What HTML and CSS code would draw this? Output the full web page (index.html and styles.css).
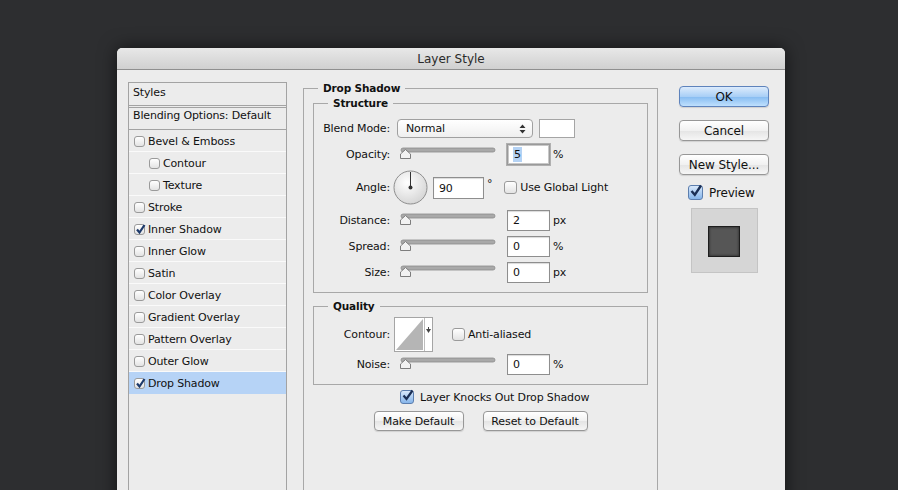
FILE: index.html
```html
<!DOCTYPE html>
<html lang="en">
<head>
    <meta charset="UTF-8">
    <title>Layer Style</title>
    <link rel="stylesheet" href="styles.css">
</head>
<body>
<div class="dialog">
    <div class="titlebar">Layer Style</div>
    <div class="dialog-body">
        <div class="styles-list">
            <div class="list-head">Styles</div>
            <div class="list-blend">Blending Options: Default</div>
            <div class="list-item"><span class="cb"></span>Bevel &amp; Emboss</div>
            <div class="list-item sub"><span class="cb"></span>Contour</div>
            <div class="list-item sub"><span class="cb"></span>Texture</div>
            <div class="list-item"><span class="cb"></span>Stroke</div>
            <div class="list-item"><span class="cb on"><svg width="11" height="11" viewBox="0 0 11 11"><path d="M2 5.5 L4.5 8.5 L9.5 1" fill="none" stroke="#1d3a6b" stroke-width="2.2"/></svg></span>Inner Shadow</div>
            <div class="list-item"><span class="cb"></span>Inner Glow</div>
            <div class="list-item"><span class="cb"></span>Satin</div>
            <div class="list-item"><span class="cb"></span>Color Overlay</div>
            <div class="list-item"><span class="cb"></span>Gradient Overlay</div>
            <div class="list-item"><span class="cb"></span>Pattern Overlay</div>
            <div class="list-item"><span class="cb"></span>Outer Glow</div>
            <div class="list-item selected"><span class="cb on"><svg width="11" height="11" viewBox="0 0 11 11"><path d="M2 5.5 L4.5 8.5 L9.5 1" fill="none" stroke="#1d3a6b" stroke-width="2.2"/></svg></span>Drop Shadow</div>
            <div class="list-rest"></div>
        </div>

        <div class="panel">
            <fieldset class="group outer">
                <legend>Drop Shadow</legend>

                <fieldset class="group inner structure">
                    <legend>Structure</legend>
                    <div class="row h19">
                        <label class="lbl">Blend Mode:</label>
                        <div class="select">Normal
                            <svg class="updown" width="7" height="10" viewBox="0 0 7 10"><path d="M3.5 0.5 L6.5 4 L0.5 4 Z M3.5 9.5 L6.5 6 L0.5 6 Z" fill="#333"/></svg>
                        </div>
                        <div class="swatch"></div>
                    </div>
                    <div class="row h21 gap6">
                        <label class="lbl">Opacity:</label>
                        <svg class="slider" width="96" height="12" viewBox="0 0 96 12"><rect x="1" y="1" width="94" height="4" rx="2" fill="#a9a9a9" stroke="#8c8c8c" stroke-width="0.8"/><path d="M0.5 11.5 L0.5 7 L5.5 2.5 L10.5 7 L10.5 11.5 Z" fill="#f2f2f2" stroke="#7d7d7d"/></svg>
                        <div class="field focus"><span class="sel">5</span></div>
                        <span class="unit">%</span>
                    </div>
                    <div class="row h35 gap5">
                        <label class="lbl">Angle:</label>
                        <svg class="dial" width="35" height="35" viewBox="0 0 35 35">
                            <defs><radialGradient id="dg" cx="0.4" cy="0.35" r="0.7"><stop offset="0" stop-color="#ffffff"/><stop offset="1" stop-color="#d4d4d4"/></radialGradient></defs>
                            <circle cx="17.5" cy="17.5" r="16.5" fill="url(#dg)" stroke="#8e8e8e"/>
                            <line x1="17.5" y1="17.5" x2="17.5" y2="2" stroke="#333" stroke-width="1"/>
                            <circle cx="17.5" cy="17.5" r="2" fill="#333"/>
                        </svg>
                        <div class="field angle">90</div>
                        <span class="deg">°</span>
                        <span class="cb big global"></span>
                        <span class="cb-text">Use Global Light</span>
                    </div>
                    <div class="row h21 gap5">
                        <label class="lbl">Distance:</label>
                        <svg class="slider" width="96" height="12" viewBox="0 0 96 12"><rect x="1" y="1" width="94" height="4" rx="2" fill="#a9a9a9" stroke="#8c8c8c" stroke-width="0.8"/><path d="M0.5 11.5 L0.5 7 L5.5 2.5 L10.5 7 L10.5 11.5 Z" fill="#f2f2f2" stroke="#7d7d7d"/></svg>
                        <div class="field">2</div>
                        <span class="unit">px</span>
                    </div>
                    <div class="row h21 gap5">
                        <label class="lbl">Spread:</label>
                        <svg class="slider" width="96" height="12" viewBox="0 0 96 12"><rect x="1" y="1" width="94" height="4" rx="2" fill="#a9a9a9" stroke="#8c8c8c" stroke-width="0.8"/><path d="M0.5 11.5 L0.5 7 L5.5 2.5 L10.5 7 L10.5 11.5 Z" fill="#f2f2f2" stroke="#7d7d7d"/></svg>
                        <div class="field">0</div>
                        <span class="unit">%</span>
                    </div>
                    <div class="row h21 gap5">
                        <label class="lbl">Size:</label>
                        <svg class="slider" width="96" height="12" viewBox="0 0 96 12"><rect x="1" y="1" width="94" height="4" rx="2" fill="#a9a9a9" stroke="#8c8c8c" stroke-width="0.8"/><path d="M0.5 11.5 L0.5 7 L5.5 2.5 L10.5 7 L10.5 11.5 Z" fill="#f2f2f2" stroke="#7d7d7d"/></svg>
                        <div class="field">0</div>
                        <span class="unit">px</span>
                    </div>
                </fieldset>

                <fieldset class="group inner quality">
                    <legend>Quality</legend>
                    <div class="row h35">
                        <label class="lbl">Contour:</label>
                        <div class="contour">
                            <svg width="29" height="33" viewBox="0 0 29 33"><path d="M1 32 L28 1 L28 32 Z" fill="#b5b5b5"/></svg>
                            <span class="contour-arrow"><svg width="5" height="8" viewBox="0 0 5 8"><path d="M0 2 L5 2 L2.5 6 Z M2 0 L3 0 L3 3 L2 3 Z" fill="#444"/></svg></span>
                        </div>
                        <span class="cb big anti"></span>
                        <span class="cb-text">Anti-aliased</span>
                    </div>
                    <div class="row h21 gap3">
                        <label class="lbl">Noise:</label>
                        <svg class="slider" width="96" height="12" viewBox="0 0 96 12"><rect x="1" y="1" width="94" height="4" rx="2" fill="#a9a9a9" stroke="#8c8c8c" stroke-width="0.8"/><path d="M0.5 11.5 L0.5 7 L5.5 2.5 L10.5 7 L10.5 11.5 Z" fill="#f2f2f2" stroke="#7d7d7d"/></svg>
                        <div class="field">0</div>
                        <span class="unit">%</span>
                    </div>
                </fieldset>

                <div class="knock">
                    <span class="cb big blue"><svg width="13" height="13" viewBox="0 0 13 13"><path d="M2.5 6.5 L5.5 10 L11.5 1.5" fill="none" stroke="#1b2f55" stroke-width="2.2"/></svg></span>
                    <span class="cb-text">Layer Knocks Out Drop Shadow</span>
                </div>
                <div class="defaults">
                    <button class="btn small w89">Make Default</button>
                    <button class="btn small w104">Reset to Default</button>
                </div>
            </fieldset>
        </div>

        <div class="actions">
            <button class="btn primary">OK</button>
            <button class="btn">Cancel</button>
            <button class="btn">New Style...</button>
            <div class="preview-check">
                <span class="cb big blue"><svg width="14" height="14" viewBox="0 0 14 14"><path d="M2.5 7 L5.8 10.8 L12 1.5" fill="none" stroke="#1b2f55" stroke-width="2.4"/></svg></span>
                <span class="preview-text">Preview</span>
            </div>
            <div class="preview-box">
                <div class="preview-swatch"></div>
            </div>
        </div>
    </div>
</div>
</body>
</html>
```

FILE: styles.css
```css
html, body {
    margin: 0;
    padding: 0;
}
body {
    background-color: #2d2e30;
    font-family: "DejaVu Sans", Verdana, sans-serif;
    font-size: 11px;
    letter-spacing: -0.15px;
    color: #111;
    height: 490px;
    overflow: hidden;
}
.dialog {
    margin: 48px 0 0 117px;
    width: 668px;
    height: 460px;
    background-color: #ececec;
    border-radius: 5px 5px 0 0;
    box-shadow: 0 0 18px rgba(0, 0, 0, 0.6);
    display: flex;
    flex-direction: column;
    overflow: hidden;
}
.titlebar {
    height: 21px;
    line-height: 23px;
    text-align: center;
    font-size: 12px;
    letter-spacing: 0;
    color: #2a2a2a;
    background: linear-gradient(#e8e8e8, #d0d0d0);
    border-bottom: 1px solid #8f8f8f;
    border-radius: 5px 5px 0 0;
}
.dialog-body {
    flex: 1;
    display: flex;
    align-items: flex-start;
    padding: 12px 16px 0 11px;
}

/* styles list */
.styles-list {
    width: 157px;
    height: 420px;
    border: 1px solid #a3a3a3;
    background-color: #ececec;
    display: flex;
    flex-direction: column;
}
.list-head {
    height: 19px;
    padding: 3px 0 0 4px;
    line-height: 14px;
    border-bottom: 3px double #a3a3a3;
}
.list-blend {
    height: 21px;
    line-height: 15px;
    padding-left: 4px;
    border-bottom: 1px solid #a3a3a3;
}
.list-item {
    height: 20px;
    padding-top: 1px;
    display: flex;
    align-items: center;
    padding-left: 5px;
    border-bottom: 1px solid #fafafa;
}
.list-item.sub {
    padding-left: 20px;
}
.list-item.selected {
    background-color: #b6d3f6;
    border-bottom-color: #b6d3f6;
}
.cb {
    width: 9px;
    height: 9px;
    border: 1px solid #9a9a9a;
    border-radius: 3px;
    background: linear-gradient(#ffffff, #e3e3e3);
    margin-right: 3px;
    position: relative;
    flex: none;
}
.cb svg {
    position: absolute;
    left: 0;
    top: -1px;
}
.cb.big {
    width: 11px;
    height: 11px;
}
.cb.blue {
    width: 12px;
    height: 12px;
    border-color: #5c7eae;
    background: linear-gradient(#d8e8fb, #86b5ea);
}
.cb.blue svg {
    top: -2px;
    left: 0;
}

/* main panel */
.panel {
    width: 355px;
    margin: -1px 0 0 16px;
}
.group {
    margin: 0;
    min-width: 0;
    border: 1px solid #a8a8a8;
}
.group legend {
    font-weight: bold;
    font-size: 10.5px;
    line-height: 14px;
    padding: 0 5px;
}
.outer {
    padding: 0 9px;
    height: 440px;
}
.outer > legend {
    margin-left: 5px;
}
.inner {
    padding: 0 0 9px 0;
}
.inner > legend {
    margin-left: 14px;
}
.structure {
    margin-top: 1px;
    padding-top: 9px;
}
.quality {
    margin-top: 6px;
    padding-top: 4px;
}
.row {
    display: flex;
    align-items: center;
}
.h19 { height: 19px; }
.h21 { height: 21px; }
.h35 { height: 35px; }
.gap3 { margin-top: 2px; }
.gap5 { margin-top: 5px; }
.gap6 { margin-top: 6px; }
.lbl {
    width: 76px;
    text-align: right;
    flex: none;
}
.select {
    width: 126px;
    height: 17px;
    margin-left: 7px;
    padding: 0 0 0 8px;
    border: 1px solid #a0a0a0;
    border-radius: 4px;
    background: linear-gradient(#ffffff, #efefef);
    display: flex;
    align-items: center;
    justify-content: space-between;
    line-height: 17px;
}
.updown {
    margin-right: 6px;
}
.swatch {
    width: 34px;
    height: 17px;
    margin-left: 6px;
    border: 1px solid #a5a5a5;
    background-color: #fff;
}
.slider {
    margin: 0 0 3px 10px;
    flex: none;
}
.field {
    width: 36px;
    height: 19px;
    margin-left: 11px;
    padding-left: 5px;
    border: 1px solid #8e8e8e;
    background-color: #fff;
    line-height: 20px;
    box-shadow: inset 0 1px 1px rgba(0, 0, 0, 0.15);
}
.field.focus {
    border-color: #9a9a9a;
    box-shadow: 0 0 0 1px #b0b0b0, inset 0 0 0 1px #c8c8c8;
}
.sel {
    background-color: #b4d2f4;
    padding: 1px 1px;
}
.unit {
    margin-left: 3px;
}
.dial {
    margin-left: 3px;
    flex: none;
}
.field.angle {
    width: 44px;
    height: 20px;
    margin-left: 5px;
    line-height: 21px;
}
.deg {
    margin: -8px 0 0 3px;
}
.cb.global {
    margin-left: 12px;
    margin-right: 0;
}
.cb-text {
    margin-left: 3px;
}
.contour {
    width: 37px;
    height: 33px;
    margin-left: 4px;
    border: 1px solid #a5a5a5;
    background-color: #fff;
    display: flex;
}
.contour svg {
    display: block;
}
.contour-arrow {
    width: 7px;
    border-left: 1px solid #bdbdbd;
    display: flex;
    align-items: center;
    justify-content: center;
    padding-bottom: 8px;
    box-sizing: border-box;
}
.cb.anti {
    margin-left: 19px;
    margin-right: 0;
}
.knock {
    display: flex;
    align-items: center;
    height: 14px;
    margin: 5px 0 0 87px;
}
.knock .cb-text {
    margin-left: 3px;
}
.defaults {
    display: flex;
    justify-content: center;
    gap: 19px;
    margin-top: 7px;
}

/* buttons */
.btn {
    font-family: "DejaVu Sans", Verdana, sans-serif;
    font-size: 12px;
    letter-spacing: -0.1px;
    color: #111;
    width: 90px;
    height: 21px;
    padding: 0;
    border: 1px solid #979797;
    border-radius: 4px;
    background: linear-gradient(#ffffff, #f1f1f1 50%, #e4e4e4 51%, #f6f6f6);
    box-shadow: 0 1px 1px rgba(0, 0, 0, 0.12);
}
.btn.small {
    font-size: 11px;
    height: 20px;
}
.w89 { width: 90px; }
.w104 { width: 105px; }
.btn.primary {
    border-color: #5e83bc;
    background: linear-gradient(#dcebfc, #a9cff6 50%, #85bbf1 51%, #bfe0fd);
}
.actions {
    width: 90px;
    margin: 4px 0 0 21px;
    display: flex;
    flex-direction: column;
    gap: 13px;
}
.preview-check {
    display: flex;
    align-items: center;
    margin: -3px 0 0 9px;
}
.preview-check .cb.blue {
    width: 13px;
    height: 13px;
}
.preview-text {
    font-size: 12px;
    margin-left: 3px;
}
.preview-box {
    width: 65px;
    height: 63px;
    margin: -5px 0 0 12px;
    border: 1px solid #c4c4c4;
    background-color: #d6d6d6;
    display: flex;
    align-items: center;
    justify-content: center;
}
.preview-swatch {
    width: 30px;
    height: 29px;
    margin: 2px 1px 0 0;
    border: 1px solid #1e1e1e;
    background-color: #565656;
    box-shadow: inset 0 0 3px rgba(0, 0, 0, 0.6);
}
```
